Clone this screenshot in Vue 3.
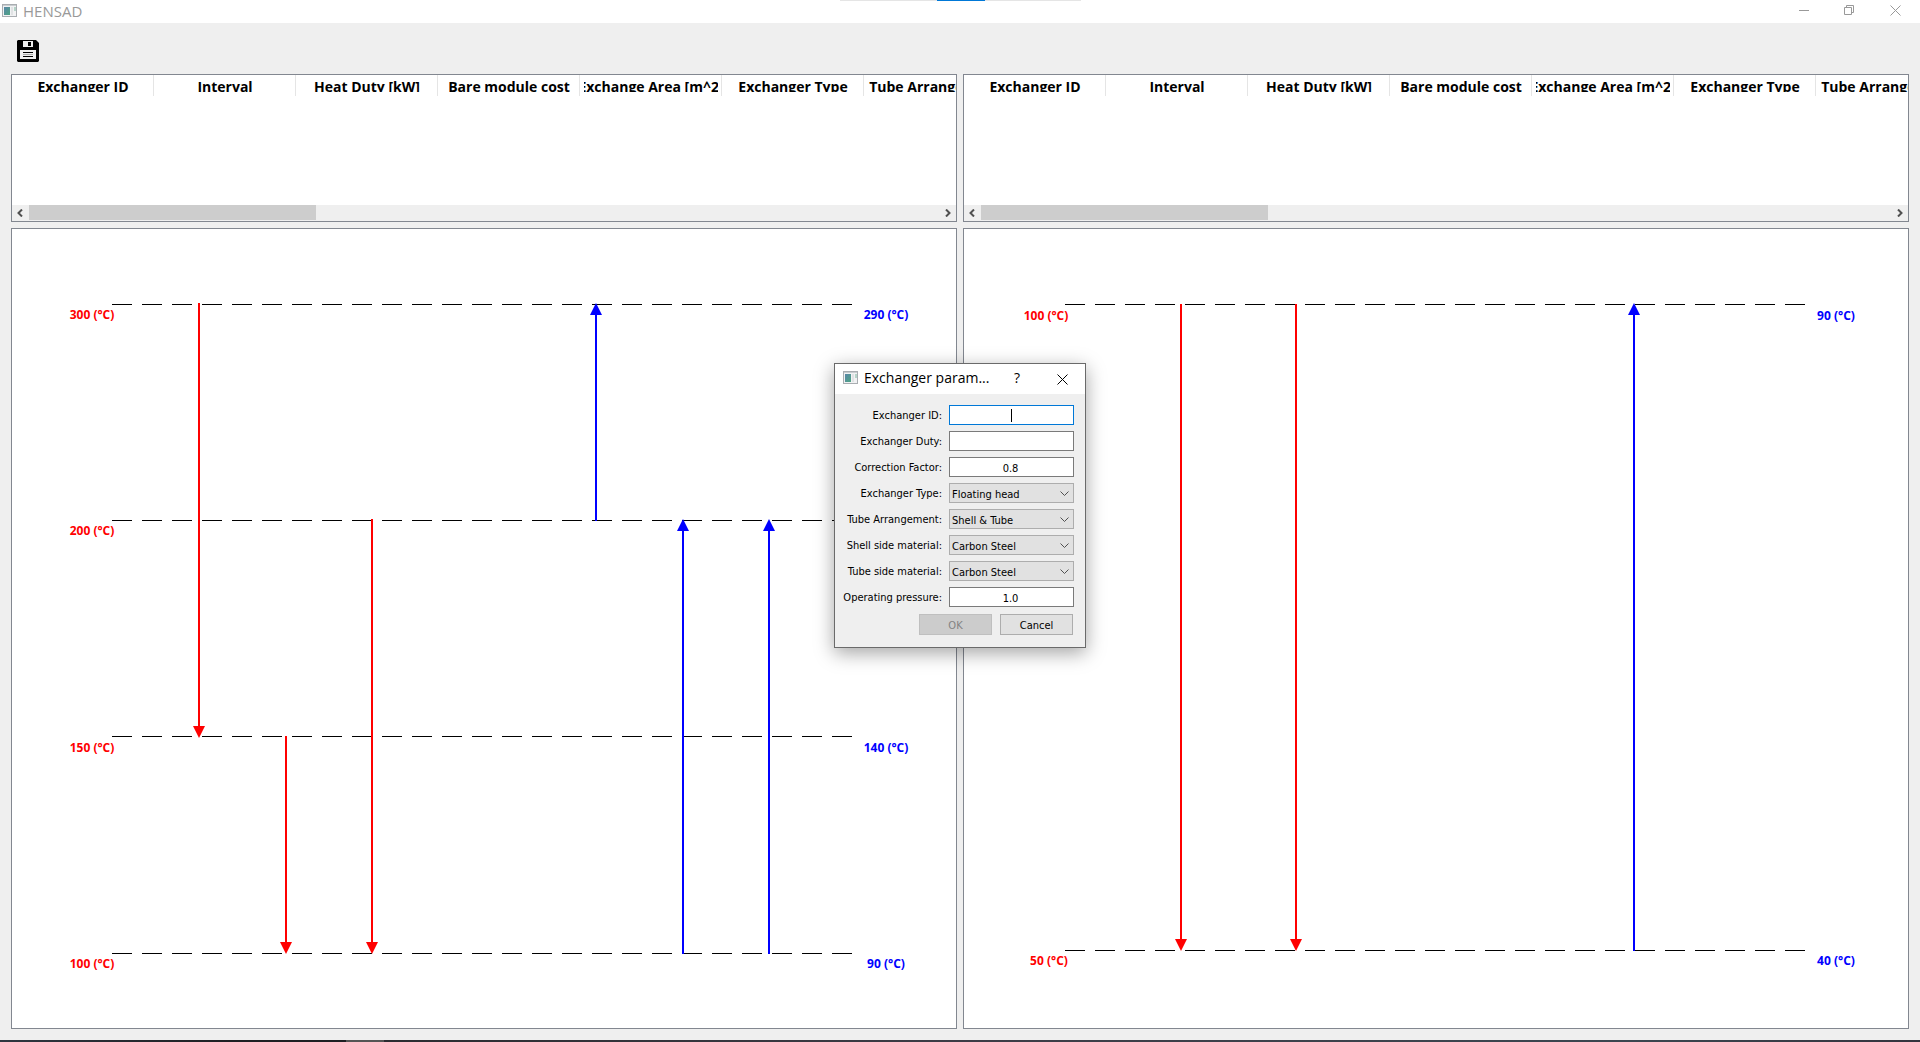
<script setup>
import { reactive } from 'vue'

const columns = [
  'Exchanger ID',
  'Interval',
  'Heat Duty [kW]',
  'Bare module cost',
  'Exchange Area [m^2]',
  'Exchanger Type',
  'Tube Arrangement',
]

const diagrams = [
  {
    name: 'Above pinch',
    lineStart: 100,
    lineEnd: 840,
    levels: [75, 291, 507, 724],
    hot: [
      { x: 187, from: 74, to: 509 },
      { x: 274, from: 507, to: 725 },
      { x: 360, from: 290, to: 725 },
    ],
    cold: [
      { x: 584, from: 292, to: 74 },
      { x: 671, from: 725, to: 290 },
      { x: 757, from: 725, to: 290 },
    ],
    labels: [
      { x: 80, y: 90, text: '300 (°C)', kind: 'hot' },
      { x: 80, y: 306, text: '200 (°C)', kind: 'hot' },
      { x: 80, y: 523, text: '150 (°C)', kind: 'hot' },
      { x: 80, y: 739, text: '100 (°C)', kind: 'hot' },
      { x: 874, y: 90, text: '290 (°C)', kind: 'cold' },
      { x: 874, y: 523, text: '140 (°C)', kind: 'cold' },
      { x: 874, y: 739, text: '90 (°C)', kind: 'cold' },
    ],
  },
  {
    name: 'Below pinch',
    lineStart: 101,
    lineEnd: 841,
    levels: [75, 721],
    hot: [
      { x: 217, from: 75, to: 722 },
      { x: 332, from: 75, to: 722 },
    ],
    cold: [{ x: 670, from: 722, to: 74 }],
    labels: [
      { x: 82, y: 91, text: '100 (°C)', kind: 'hot' },
      { x: 85, y: 736, text: '50 (°C)', kind: 'hot' },
      { x: 872, y: 91, text: '90 (°C)', kind: 'cold' },
      { x: 872, y: 736, text: '40 (°C)', kind: 'cold' },
    ],
  },
]

const fields = reactive([
  { id: 'exchanger-id', label: 'Exchanger ID:', value: '', active: true },
  { id: 'duty', label: 'Exchanger Duty:', value: '' },
  { id: 'correction', label: 'Correction Factor:', value: '0.8' },
  { id: 'type', label: 'Exchanger Type:', value: 'Floating head', options: ['Floating head'] },
  { id: 'arrangement', label: 'Tube Arrangement:', value: 'Shell & Tube', options: ['Shell & Tube'] },
  { id: 'shell', label: 'Shell side material:', value: 'Carbon Steel', options: ['Carbon Steel'] },
  { id: 'tube', label: 'Tube side material:', value: 'Carbon Steel', options: ['Carbon Steel'] },
  { id: 'pressure', label: 'Operating pressure:', value: '1.0' },
])

function shaftEnd(arrow) {
  return arrow.to > arrow.from ? arrow.to - 10 : arrow.to + 10
}

function head(arrow) {
  const base = arrow.to > arrow.from ? arrow.to - 12 : arrow.to + 12
  return `${arrow.x - 6},${base} ${arrow.x + 6},${base} ${arrow.x},${arrow.to}`
}
</script>

<template>
  <div class="window">
    <div class="grabber"><div class="grabber-mark"></div></div>
    <header class="titlebar">
      <svg class="app-icon" width="16" height="16" viewBox="0 0 16 16" aria-hidden="true">
        <defs>
          <linearGradient id="screen" x1="0" y1="0" x2="1" y2="1">
            <stop offset="0" stop-color="#5a86a8" />
            <stop offset="1" stop-color="#4da583" />
          </linearGradient>
        </defs>
        <rect x="0.5" y="0.5" width="14" height="12" fill="#f1f2f3" stroke="#a9adb1" />
        <path d="M1 1.5h13" stroke="#c9cdd0" />
        <rect x="2" y="3" width="6" height="8" fill="url(#screen)" />
        <rect x="9" y="3" width="2" height="8" fill="#e0e2e4" />
        <rect x="12" y="3" width="2" height="4" fill="#b5d3c8" />
      </svg>
      <h1 class="title">HENSAD</h1>
      <div class="controls">
        <button class="control" aria-label="Minimize">
          <svg width="11" height="11" viewBox="0 0 11 11"><path d="M1 5.5h10" /></svg>
        </button>
        <button class="control" aria-label="Restore">
          <svg width="11" height="11" viewBox="0 0 11 11">
            <path d="M0.5 2.5h7v7h-7zM2.5 2.5v-2h7v7h-2" />
          </svg>
        </button>
        <button class="control" aria-label="Close">
          <svg width="11" height="11" viewBox="0 0 11 11"><path d="M0.5 0.5l10 10M10.5 0.5l-10 10" /></svg>
        </button>
      </div>
    </header>

    <div class="toolbar">
      <button class="save" aria-label="Save">
        <svg width="22" height="22" viewBox="0 0 22 22">
          <path d="M1 0h18l3 3v18l-1 1H1l-1-1V1z" fill="#000" />
          <path d="M6 1h10v6H6z" fill="#efefef" />
          <path d="M11 2h3v4h-3z" fill="#000" />
          <path d="M3 10h16v9H3z" fill="#efefef" />
          <path d="M6 12.5h10M6 16.5h10" stroke="#000" />
          <path d="M6 14.5h10" stroke="#aaa" />
        </svg>
      </button>
    </div>

    <main class="panes">
      <section v-for="diagram in diagrams" :key="diagram.name" class="pane" :aria-label="diagram.name">
        <div class="grid-box">
          <div class="grid-view">
            <table class="grid">
              <thead>
                <tr>
                  <th v-for="column in columns" :key="column" scope="col">
                    <div class="head-text"><span>{{ column }}</span></div>
                  </th>
                </tr>
              </thead>
            </table>
          </div>
          <div class="scrollbar">
            <button class="scroll-step" aria-label="Scroll left">
              <svg width="7" height="8" viewBox="0 0 7 8"><path d="M5 0.5L1.500 4l3.500 3.500" /></svg>
            </button>
            <div class="track"><div class="thumb"></div></div>
            <button class="scroll-step" aria-label="Scroll right">
              <svg width="7" height="8" viewBox="0 0 7 8"><path d="M2 0.5L5.500 4L2 7.500" /></svg>
            </button>
          </div>
        </div>

        <div class="diagram">
          <svg class="canvas" viewBox="0 0 944 799">
            <path
              v-for="y in diagram.levels"
              :key="'level' + y"
              class="level"
              :d="`M${diagram.lineStart} ${y + 0.5}H${diagram.lineEnd}`"
            />
            <g v-for="arrow in diagram.hot" :key="'hot' + arrow.x" class="hot">
              <path class="shaft" :d="`M${arrow.x} ${arrow.from}V${shaftEnd(arrow)}`" />
              <polygon :points="head(arrow)" />
            </g>
            <g v-for="arrow in diagram.cold" :key="'cold' + arrow.x" class="cold">
              <path class="shaft" :d="`M${arrow.x} ${arrow.from}V${shaftEnd(arrow)}`" />
              <polygon :points="head(arrow)" />
            </g>
            <text
              v-for="label in diagram.labels"
              :key="label.kind + label.text"
              class="temperature"
              :class="label.kind"
              :x="label.x"
              :y="label.y"
            >{{ label.text }}</text>
          </svg>
        </div>
      </section>
    </main>
    <footer class="taskbar"></footer>

    <form class="dialog" role="dialog" aria-labelledby="dialog-title" @submit.prevent>
      <div class="dialog-bar">
        <svg width="16" height="16" viewBox="0 0 16 16" aria-hidden="true">
          <rect x="0.5" y="0.5" width="14" height="12" fill="#f1f2f3" stroke="#a9adb1" />
          <path d="M1 1.5h13" stroke="#c9cdd0" />
          <rect x="2" y="3" width="6" height="8" fill="url(#screen)" />
          <rect x="9" y="3" width="2" height="8" fill="#e0e2e4" />
          <rect x="12" y="3" width="2" height="4" fill="#b5d3c8" />
        </svg>
        <h2 id="dialog-title" class="dialog-title">Exchanger param...</h2>
        <button type="button" class="help">?</button>
        <button type="button" class="dialog-close" aria-label="Close">
          <svg width="11" height="11" viewBox="0 0 11 11"><path d="M0.5 0.5l10 10M10.5 0.5l-10 10" /></svg>
        </button>
      </div>
      <div class="dialog-body">
        <div v-for="field in fields" :key="field.id" class="row">
          <label :for="field.id">{{ field.label }}</label>
          <div class="control-box">
            <template v-if="field.options">
              <select :id="field.id" v-model="field.value">
                <option v-for="option in field.options" :key="option">{{ option }}</option>
              </select>
              <svg class="chevron" width="9" height="6" viewBox="0 0 9 6"><path d="M0.500 0.500l4 4l4-4" /></svg>
            </template>
            <template v-else>
              <input :id="field.id" v-model="field.value" type="text" :class="{ active: field.active }" />
              <span v-if="field.active" class="caret"></span>
            </template>
          </div>
        </div>
        <div class="actions">
          <button type="submit" disabled>OK</button>
          <button type="button">Cancel</button>
        </div>
      </div>
    </form>
  </div>
</template>

<style>
body {
  margin: 0;
  background: #efefef;
}
</style>

<style scoped>
.window {
  position: relative;
  min-height: 100vh;
  display: flex;
  flex-direction: column;
  background: #efefef;
  color: #000;
  font-family: "Open Sans", "Noto Sans", sans-serif;
}

button {
  padding: 0;
  border: 0;
  background: none;
  color: inherit;
  font: inherit;
}

svg {
  display: block;
}

.grabber {
  position: absolute;
  top: 0;
  left: 50%;
  width: 241px;
  height: 1px;
  margin-left: -120px;
  background: #e5e5e5;
}

.grabber-mark {
  width: 48px;
  height: 1px;
  margin: 0 auto;
  background: #0078d7;
}

.titlebar {
  display: flex;
  align-items: center;
  height: 23px;
  padding: 0 2px;
  background: #fff;
}

.title {
  flex: 1;
  margin: 0 0 0 5px;
  font-size: 15px;
  line-height: 20px;
  padding-bottom: 2px;
  font-weight: 400;
  color: #999;
}

.controls {
  display: flex;
  align-self: flex-start;
}

.control {
  display: flex;
  justify-content: center;
  align-items: center;
  width: 46px;
  height: 21px;
}

.control path {
  fill: none;
  stroke: #999;
}

.toolbar {
  height: 34px;
  padding: 17px 17px 0;
}

.save {
  display: block;
}

.panes {
  display: flex;
  gap: 6px;
  padding: 0 11px 11px;
}

.pane {
  flex: 1;
  min-width: 0;
  display: flex;
  flex-direction: column;
  gap: 6px;
}

.grid-box,
.diagram {
  border: 1px solid #828790;
  background: #fff;
}

.grid-view {
  height: 130px;
  overflow: hidden;
}

.grid {
  width: 994px;
  table-layout: fixed;
  border-collapse: separate;
  border-spacing: 0;
}

.grid th {
  width: 142px;
  height: 21px;
  box-sizing: border-box;
  padding: 0 3px 4px 4px;
  border-right: 1px solid #e5e5e5;
  vertical-align: top;
}

.head-text {
  display: flex;
  justify-content: center;
  height: 17px;
  overflow: hidden;
  white-space: nowrap;
  font-size: 14px;
  line-height: 24px;
  font-weight: 700;
}

.scrollbar {
  display: flex;
  height: 16px;
  background: #efefef;
}

.scroll-step {
  display: flex;
  justify-content: center;
  align-items: center;
  width: 17px;
  height: 15px;
}

.scroll-step path {
  fill: none;
  stroke: #505050;
  stroke-width: 2;
}

.track {
  flex: 1;
}

.thumb {
  width: 287px;
  height: 15px;
  background: #cdcdcd;
}

.canvas {
  width: 100%;
  height: auto;
}

.level {
  stroke: #000;
  stroke-dasharray: 20 10;
}

.hot {
  fill: #f00;
}

.cold {
  fill: #00f;
}

.shaft {
  stroke-width: 2;
}

.hot .shaft {
  stroke: #f00;
}

.cold .shaft {
  stroke: #00f;
}

.temperature {
  font-size: 12px;
  font-weight: 700;
  text-anchor: middle;
}

.taskbar {
  height: 2px;
  margin-top: auto;
  background: linear-gradient(90deg, #2f3640, #1e1f23 12%, #1e1f23 18%, #555 18%, #555 20%, #2b2c31 20%, #3c3c46 50%, #3b4650 85%, #34343e);
}

.dialog {
  position: absolute;
  top: 363px;
  left: 50%;
  width: 250px;
  margin-left: -126px;
  border: 1px solid #6a6a6a;
  background: #efefef;
  box-shadow: 0 5px 18px rgba(0, 0, 0, 0.36);
}

.dialog-bar {
  display: flex;
  align-items: center;
  height: 30px;
  padding: 0 7px 0 8px;
  background: #fff;
}

.dialog-title {
  flex: 1;
  margin: 0 0 0 5px;
  font-size: 14px;
  line-height: 20px;
  padding-bottom: 2px;
  font-weight: 400;
  white-space: nowrap;
}

.help {
  width: 20px;
  padding-bottom: 2px;
  font-size: 14px;
  line-height: 20px;
}

.dialog-close {
  display: flex;
  justify-content: center;
  width: 31px;
  margin-left: 20px;
}

.dialog-close path {
  fill: none;
  stroke: #000;
}

.dialog-body {
  display: flex;
  flex-direction: column;
  gap: 4px;
  padding: 11px 11px 12px;
  font-family: "DejaVu Sans Condensed", "DejaVu Sans", sans-serif;
  font-size: 11px;
}

.row {
  display: flex;
  align-items: flex-start;
  justify-content: flex-end;
  gap: 7px;
}

.row label {
  line-height: 22px;
  white-space: nowrap;
}

.control-box {
  position: relative;
  flex: none;
  width: 125px;
  height: 20px;
}

.control-box input,
.control-box select {
  display: block;
  box-sizing: border-box;
  width: 100%;
  height: 20px;
  margin: 0;
  border: 1px solid #7a7a7a;
  border-radius: 0;
  outline: 0;
  background: #fff;
  color: #000;
  font: inherit;
}

.control-box input {
  padding: 2px 3px 0 1px;
  text-align: center;
}

.control-box input.active {
  border-color: #0078d7;
}

.control-box select {
  appearance: none;
  padding: 2px 18px 0 2px;
  border-color: #adadad;
  background: #e1e1e1;
}

.chevron {
  position: absolute;
  top: 8px;
  right: 5px;
  pointer-events: none;
}

.chevron path {
  fill: none;
  stroke: #505050;
}

.caret {
  position: absolute;
  top: 4px;
  left: 62px;
  width: 1px;
  height: 13px;
  background: #000;
}

.actions {
  display: flex;
  justify-content: flex-end;
  gap: 8px;
  padding: 1px 1px 0 0;
}

.actions button {
  width: 73px;
  height: 21px;
  padding-top: 1px;
  border: 1px solid #adadad;
  background: #e1e1e1;
}

.actions button:disabled {
  border-color: #bfbfbf;
  background: #ccc;
  color: #838383;
}
</style>
